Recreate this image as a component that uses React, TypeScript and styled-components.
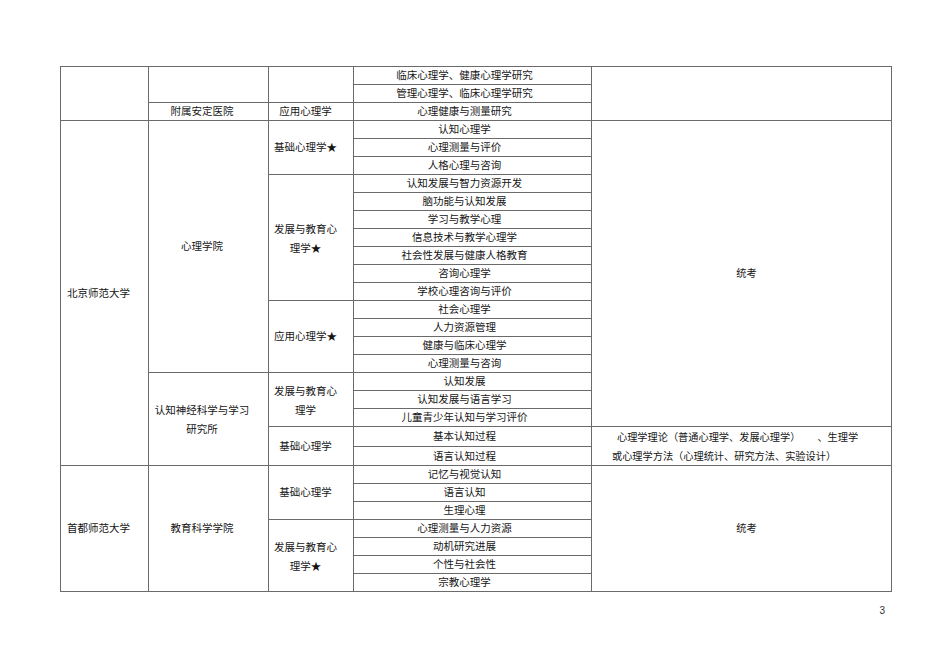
import React from 'react';
import styled, { createGlobalStyle, css } from 'styled-components';

const GlobalStyle = createGlobalStyle`
  html, body {
    margin: 0;
    padding: 0;
    background: #ffffff;
  }
  body {
    font-family: "Noto Sans CJK SC", "Liberation Serif", serif;
    color: #151515;
  }
`;

const Page = styled.div`
  width: 950px;
  height: 672px;
  box-sizing: border-box;
  padding: 66px 0 0 60px;
  display: flex;
  flex-direction: column;
`;

const Table = styled.table`
  width: 831px;
  height: 526px;
  border-collapse: collapse;
  table-layout: fixed;
  font-size: 10.5px;
  line-height: 1;
`;

const Row = styled.tr`
  height: 18px;
`;

type Kind = 'uni' | 'dept' | 'major' | 'dir' | 'exam';

const padding: Record<Kind, ReturnType<typeof css>> = {
  uni: css`
    text-align: left;
    padding: 0 2px 0 6px;
  `,
  dept: css`
    text-align: center;
    padding: 0 15px 0 2px;
  `,
  major: css`
    text-align: center;
    padding: 0 15px 0 4px;
  `,
  dir: css`
    text-align: center;
    padding: 0 18px 0 2px;
  `,
  exam: css`
    text-align: left;
    padding: 0 4px 0 20px;
    font-size: 10.2px;
  `,
};

const Cell = styled.td<{ $kind: Kind; $wrapLines?: boolean }>`
  border: 1px solid #6a6a6a;
  vertical-align: middle;
  line-height: ${p => (p.$wrapLines ? '19px' : '1')};
  white-space: nowrap;
  overflow: hidden;
  ${p => padding[p.$kind]}
`;

const Centered = styled.div`
  text-align: center;
  padding-right: 6px;
`;

const FirstLine = styled.span`
  padding-left: 5px;
`;

const Gap = styled.span`
  display: inline-block;
  width: 17px;
`;

const PageNumber = styled.div`
  width: 831px;
  margin-top: 13px;
  padding-right: 6px;
  box-sizing: border-box;
  text-align: right;
  font-family: "Liberation Sans", Arial, sans-serif;
  font-size: 10px;
  color: #333;
`;

const star = '★';

export default function App() {
  return (
    <>
      <GlobalStyle />
      <Page>
        <Table>
          <colgroup>
            <col style={{ width: 88 }} />
            <col style={{ width: 120 }} />
            <col style={{ width: 85 }} />
            <col style={{ width: 238 }} />
            <col style={{ width: 300 }} />
          </colgroup>
          <tbody>
            <Row>
              <Cell $kind="uni" rowSpan={3} />
              <Cell $kind="dept" rowSpan={2} />
              <Cell $kind="major" rowSpan={2} />
              <Cell $kind="dir">临床心理学、健康心理学研究</Cell>
              <Cell $kind="exam" rowSpan={3} />
            </Row>
            <Row>
              <Cell $kind="dir">管理心理学、临床心理学研究</Cell>
            </Row>
            <Row>
              <Cell $kind="dept">附属安定医院</Cell>
              <Cell $kind="major">应用心理学</Cell>
              <Cell $kind="dir">心理健康与测量研究</Cell>
            </Row>

            <Row>
              <Cell $kind="uni" rowSpan={19}>北京师范大学</Cell>
              <Cell $kind="dept" rowSpan={14}>心理学院</Cell>
              <Cell $kind="major" rowSpan={3}>基础心理学{star}</Cell>
              <Cell $kind="dir">认知心理学</Cell>
              <Cell $kind="exam" rowSpan={17}>
                <Centered>统考</Centered>
              </Cell>
            </Row>
            <Row><Cell $kind="dir">心理测量与评价</Cell></Row>
            <Row><Cell $kind="dir">人格心理与咨询</Cell></Row>
            <Row>
              <Cell $kind="major" rowSpan={7} $wrapLines>
                发展与教育心
                <br />
                理学{star}
              </Cell>
              <Cell $kind="dir">认知发展与智力资源开发</Cell>
            </Row>
            <Row><Cell $kind="dir">脑功能与认知发展</Cell></Row>
            <Row><Cell $kind="dir">学习与教学心理</Cell></Row>
            <Row><Cell $kind="dir">信息技术与教学心理学</Cell></Row>
            <Row><Cell $kind="dir">社会性发展与健康人格教育</Cell></Row>
            <Row><Cell $kind="dir">咨询心理学</Cell></Row>
            <Row><Cell $kind="dir">学校心理咨询与评价</Cell></Row>
            <Row>
              <Cell $kind="major" rowSpan={4}>应用心理学{star}</Cell>
              <Cell $kind="dir">社会心理学</Cell>
            </Row>
            <Row><Cell $kind="dir">人力资源管理</Cell></Row>
            <Row><Cell $kind="dir">健康与临床心理学</Cell></Row>
            <Row><Cell $kind="dir">心理测量与咨询</Cell></Row>
            <Row>
              <Cell $kind="dept" rowSpan={5} $wrapLines>
                认知神经科学与学习
                <br />
                研究所
              </Cell>
              <Cell $kind="major" rowSpan={3} $wrapLines>
                发展与教育心
                <br />
                理学
              </Cell>
              <Cell $kind="dir">认知发展</Cell>
            </Row>
            <Row><Cell $kind="dir">认知发展与语言学习</Cell></Row>
            <Row><Cell $kind="dir">儿童青少年认知与学习评价</Cell></Row>
            <Row>
              <Cell $kind="major" rowSpan={2}>基础心理学</Cell>
              <Cell $kind="dir">基本认知过程</Cell>
              <Cell $kind="exam" rowSpan={2} $wrapLines>
                <FirstLine>心理学理论（普通心理学、发展心理学）</FirstLine>
                <Gap />、生理学
                <br />
                或心理学方法（心理统计、研究方法、实验设计）
              </Cell>
            </Row>
            <Row><Cell $kind="dir">语言认知过程</Cell></Row>

            <Row>
              <Cell $kind="uni" rowSpan={7}>首都师范大学</Cell>
              <Cell $kind="dept" rowSpan={7}>教育科学学院</Cell>
              <Cell $kind="major" rowSpan={3}>基础心理学</Cell>
              <Cell $kind="dir">记忆与视觉认知</Cell>
              <Cell $kind="exam" rowSpan={7}>
                <Centered>统考</Centered>
              </Cell>
            </Row>
            <Row><Cell $kind="dir">语言认知</Cell></Row>
            <Row><Cell $kind="dir">生理心理</Cell></Row>
            <Row>
              <Cell $kind="major" rowSpan={4} $wrapLines>
                发展与教育心
                <br />
                理学{star}
              </Cell>
              <Cell $kind="dir">心理测量与人力资源</Cell>
            </Row>
            <Row><Cell $kind="dir">动机研究进展</Cell></Row>
            <Row><Cell $kind="dir">个性与社会性</Cell></Row>
            <Row><Cell $kind="dir">宗教心理学</Cell></Row>
          </tbody>
        </Table>
        <PageNumber>3</PageNumber>
      </Page>
    </>
  );
}
